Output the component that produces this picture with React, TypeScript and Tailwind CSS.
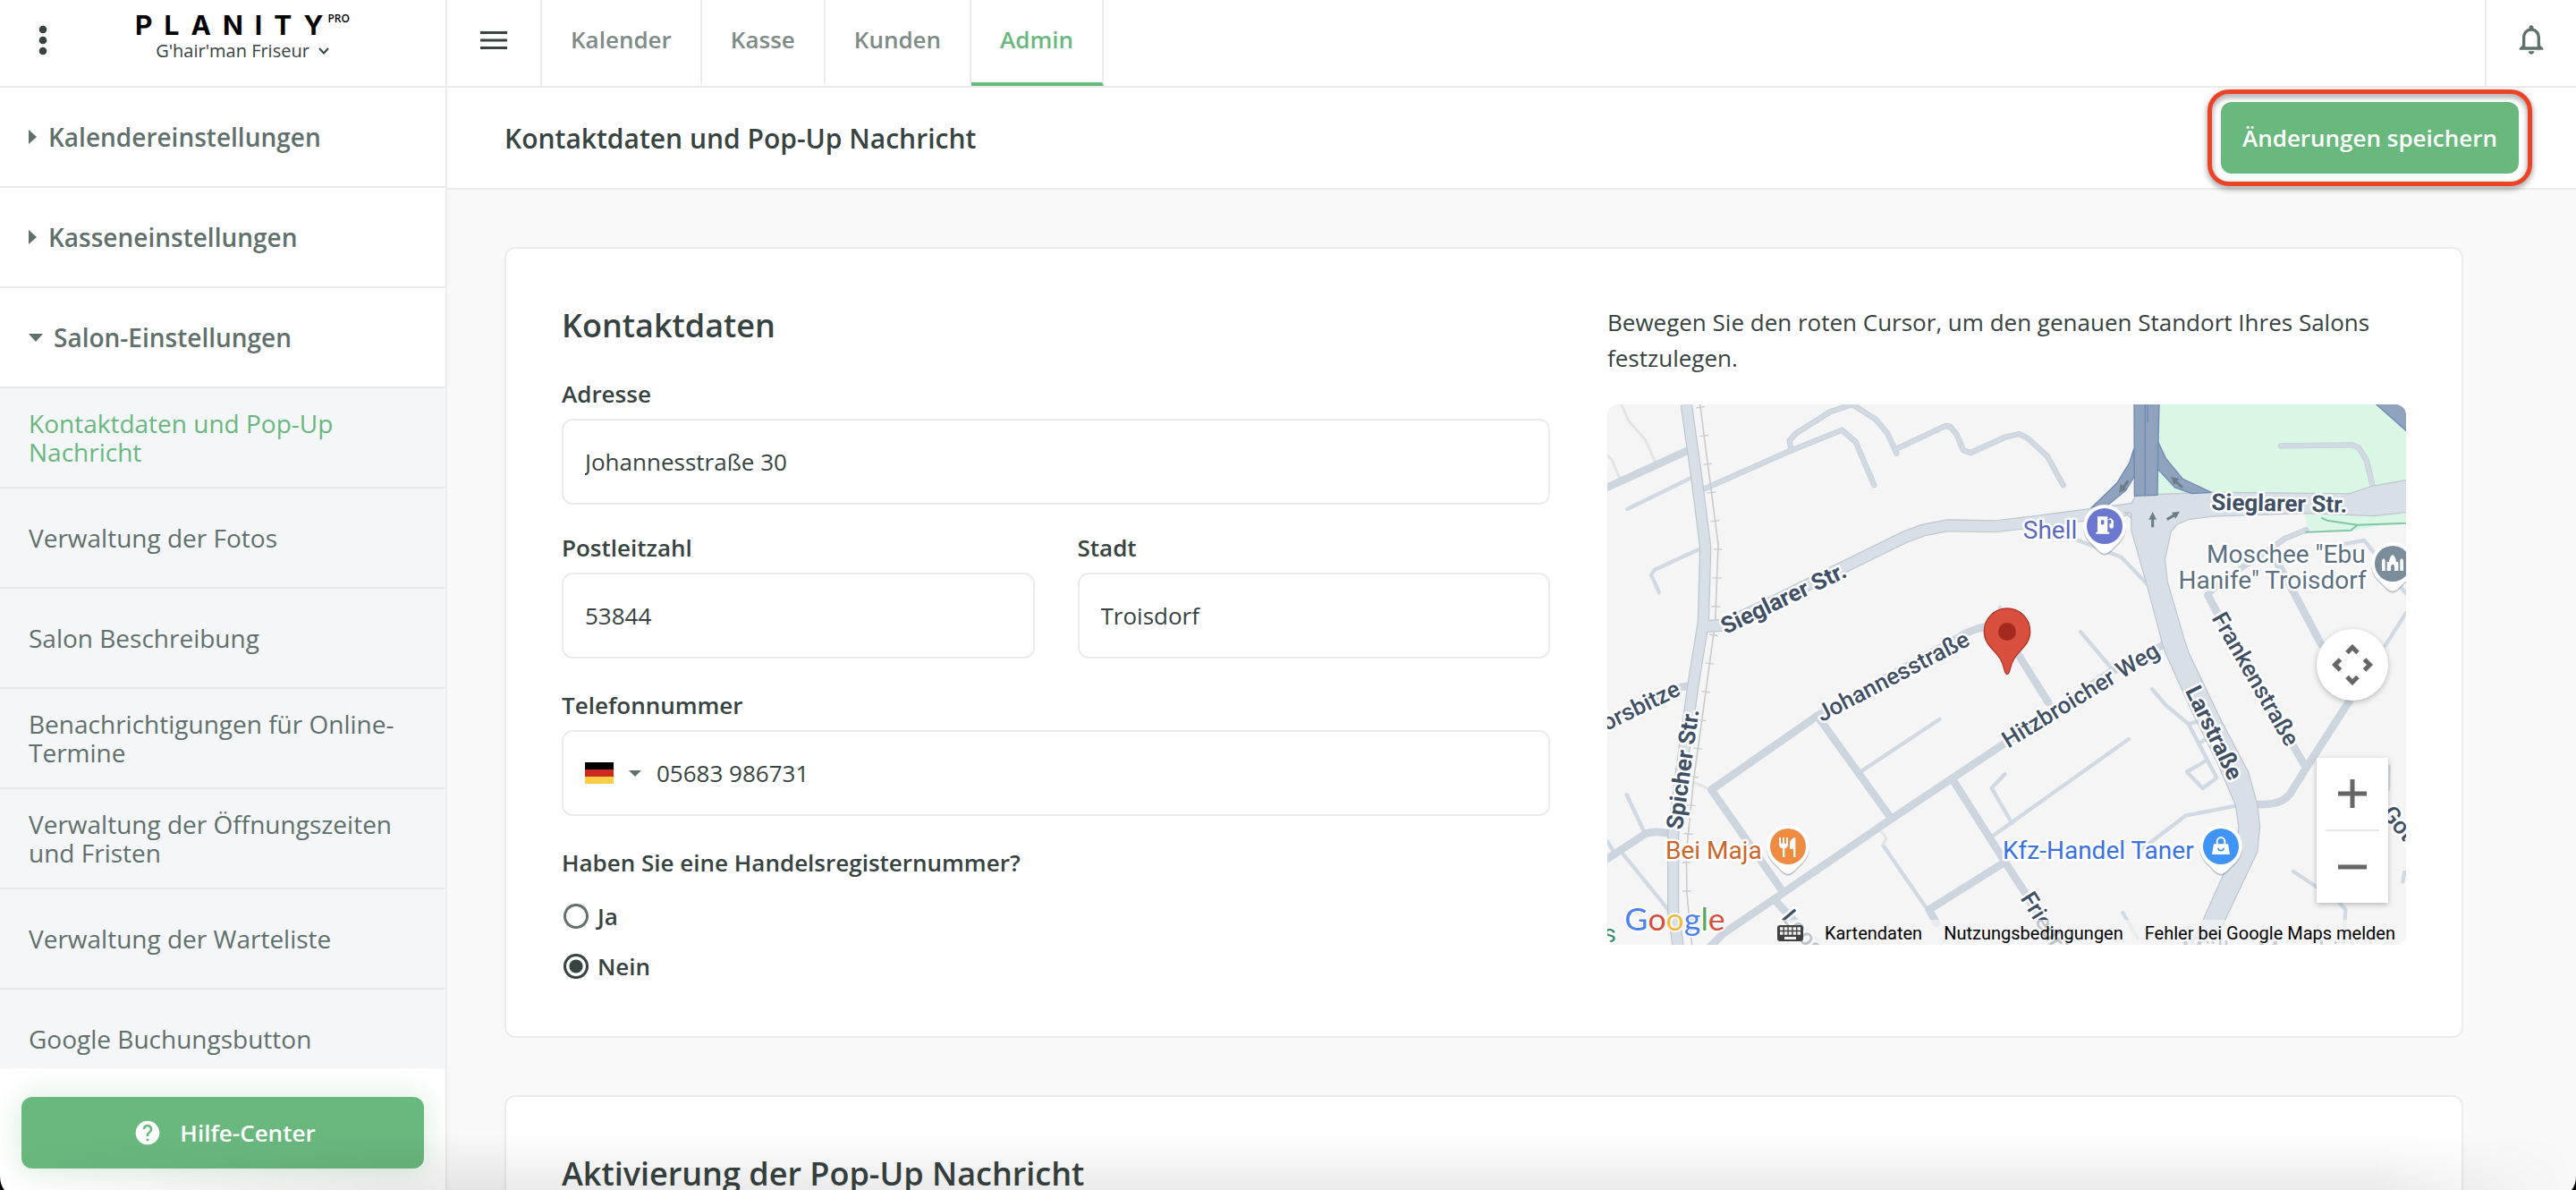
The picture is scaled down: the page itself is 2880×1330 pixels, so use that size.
import React from 'react'
import { MdHelp, MdNotificationsNone } from 'react-icons/md'

const tabs = ['Kalender', 'Kasse', 'Kunden', 'Admin']

const subItems = [
    'Kontaktdaten und Pop-Up Nachricht',
    'Verwaltung der Fotos',
    'Salon Beschreibung',
    'Benachrichtigungen für Online-Termine',
    'Verwaltung der Öffnungszeiten und Fristen',
    'Verwaltung der Warteliste',
    'Google Buchungsbutton',
]

function Caret({ open }: { open?: boolean }) {
    return open ? (
        <svg className="w-4 h-[9px]" viewBox="0 0 16 9" fill="currentColor"><path d="M0 0h16L8 9z" /></svg>
    ) : (
        <svg className="w-2.5 h-4" viewBox="0 0 10 16" fill="currentColor"><path d="M0 0v16l9-8z" /></svg>
    )
}

function SidebarHeader() {
    return (
        <div className="relative h-[98px] shrink-0 border-b-2 border-[#ececec] flex justify-center">
            <button aria-label="Menü" className="absolute left-[43px] top-[28px] text-[#374340]">
                <svg width="10" height="34" viewBox="0 0 10 34" fill="currentColor">
                    <circle cx="5" cy="5" r="4.3" />
                    <circle cx="5" cy="17" r="4.3" />
                    <circle cx="5" cy="29" r="4.3" />
                </svg>
            </button>
            <div className="flex flex-col items-center pt-3 pl-11">
                <div className="flex items-start text-black">
                    <span className="font-['Inter'] font-bold text-[30px] leading-8 tracking-[13px]">PLANITY</span>
                    <span className="-ml-2 text-xs leading-4 font-semibold pt-px">PRO</span>
                </div>
                <button className="flex items-center gap-2.5 text-xl leading-[26px] text-[#374340]">
                    G'hair'man Friseur
                    <svg width="12" height="8" viewBox="0 0 12 8" fill="none" stroke="currentColor" strokeWidth="2"><path d="M1 1l5 5.500 5-5.500" /></svg>
                </button>
            </div>
        </div>
    )
}

function Sidebar() {
    return (
        <aside className="w-[500px] shrink-0 flex flex-col border-r-2 border-[#ececec] bg-white text-[28px] text-[#60706b]">
            <SidebarHeader />
            <nav className="flex-1 min-h-0 overflow-hidden">
                {['Kalendereinstellungen', 'Kasseneinstellungen', 'Salon-Einstellungen'].map((item, index) => (
                    <button key={item} className="w-full h-28 flex items-center gap-3 px-8 border-b-2 border-[#e8eaea] font-semibold">
                        <Caret open={index === 2} />
                        {item}
                    </button>
                ))}
                <ul className="bg-[#f5f6f8]">
                    {subItems.map((item, index) => (
                        <li key={item} className="h-28 border-b-2 border-[#e8eaea]">
                            <a href="#" className={`h-full flex items-center px-8 leading-8 ${index === 0 ? 'text-[#68b87e]' : ''}`}>{item}</a>
                        </li>
                    ))}
                </ul>
            </nav>
            <div className="px-6 pt-8 pb-6">
                <button className="w-full h-20 pl-1 flex items-center justify-center gap-5 rounded-xl bg-[#69b87e] text-white text-[26px] font-semibold shadow-[0_0_32px_rgba(105,184,126,0.3)]">
                    <MdHelp size={32} />
                    Hilfe-Center
                </button>
            </div>
        </aside>
    )
}

function TopBar() {
    return (
        <header className="h-[98px] shrink-0 flex border-b-2 border-[#ececec] bg-white">
            <button aria-label="Navigation" className="w-[106px] pb-1.5 flex items-center justify-center border-r-2 border-[#ececec]">
                <svg width="30" height="20" viewBox="0 0 30 20" fill="#374340"><path d="M0 0h30v3H0zM0 8.500h30v3H0zM0 17h30v3H0z" /></svg>
            </button>
            <nav className="flex">
                {tabs.map((tab) => (
                    <a
                        key={tab}
                        href="#"
                        className={`px-8 pb-1 flex items-center border-r-2 border-r-[#ececec] border-b-4 text-[26px] font-semibold ${tab === 'Admin' ? 'border-b-[#69b87e] text-[#69b87e]' : 'border-b-transparent text-[#7f8b87]'}`}
                    >
                        {tab}
                    </a>
                ))}
            </nav>
            <button aria-label="Benachrichtigungen" className="ml-auto w-[102px] pb-2 flex items-center justify-center border-l-2 border-[#ececec] text-[#60706b]">
                <MdNotificationsNone size={40} />
            </button>
        </header>
    )
}

const localRoads = [
    'M0 278L129 219 267 156',
    'M349 1292L704 1044 1209 764Q1270 738 1319 744L1379 840 1479 999',
    'M704 1044L949 1384M349 1292L589 1634',
    'M344 1819L389 1774 559 1659 939 1399 1329 1139 1684 900 1869 804',
    'M1159 1259L1334 1534 1399 1634 1500 1812M1334 1534L1079 1694 1104 1740',
    'M559 1659L629 1734 709 1814',
    'M0 1524L129 1439Q160 1428 215 1439M279 944L249 947L0 1060',
    'M2249 534L2299 624 2394 804',
    'M2014 639L2069 744 2341 1214',
    'M2489 994L2344 1219 2290 1306Q2260 1345 2179 1341',
]

const smallRoads = [
    'M67 351L282 246M312 484L159 554 147 572 174 631',
    'M1317 680V744M1114 1056L849 1232',
    'M1749 1122L1294 1446M1334 1239L1289 1286 1357 1404',
    'M929 1484L1074 1694M65 1309L124 1434M0 1464L24 1504M54 1509L204 1694',
    'M1574 454L1724 512 1814 606M1587 762L1699 894',
    'M2464 469L2539 456 2679 634M2679 699L2609 809',
    'M2109 1346L1939 1379 1789 1494',
    'M1827 954L1874 1009 1949 1071 1979 1064M1949 1071L2044 1252 1997 1287 1944 1232 2009 1194M1984 1137L2004 1124',
    'M2301 1566L2449 1664 2476 1694 2469 1814M1729 1704L1779 1790M2621 1214L2619 1290M2674 1569L2668 1600',
]

const mediumRoads = [
    'M324 284L617 154 787 86 833 126 895 271',
    'M617 154L611 121 634 96 749 24 822 0 899 49 939 96 970 164',
    'M970 149L1134 72 1149 74 1171 99 1194 154 1219 162 1336 109 1382 99 1411 114 1476 174 1529 271',
    'M2344 421L2274 449 2209 494 2119 554 2049 604 2014 639',
    'M2259 139L2499 136 2521 146 2547 189 2567 274',
]

const spicher = 'M265 0L300 250 329 480 322 730 288 940 245 1250 221 1444 221 1700 237 1814'
const sieglarer = 'M330 744L390 740 560 660 779 552 999 444 1059 422 1139 406 1299 409 1449 391 1764 350 1820 345'
const larstrasse = 'M1759 332L1774 306 2029 296 2489 301 2564 276 2690 254V359L2572 372 2339 363 2029 374 1949 384 1909 402 1889 426 1869 519 1877 594 1934 789 1949 834 2059 1064 2149 1234 2179 1344 2187 1414 2179 1499 2069 1731 2030 1820H1955L1999 1731 2069 1574 2114 1484 2119 1414 2109 1344 2049 1204 1969 1044 1874 834 1864 804 1814 614 1759 422Z'
const rail = 'M311 0L372 470 362 730 289 1264 265 1504 267 1640 284 1814'

function PoiPin({ x, y, color, children }: any) {
    return (
        <g transform={`translate(${x} ${y})`}>
            <path d="M0 98C-10 98-22 88-30 78L-52 56A72 72 0 1 1 52 56L30 78C22 88 10 98 0 98Z" fill="#5f6b76" opacity=".35" />
            <path d="M0 92C-10 92-22 82-30 72L-52 50A72 72 0 1 1 52 50L30 72C22 82 10 92 0 92Z" fill="#fff" />
            <circle r="60" fill={color} />
            {children}
        </g>
    )
}

function MapDrawing() {
    return (
        <svg className="block w-full h-full font-['Roboto']" viewBox="0 0 2679 1812" preserveAspectRatio="xMidYMid slice">
            <rect width="2679" height="1812" fill="#f5f5f5" />
            <path d="M1849 0H2679V270L2489 310 1847 300ZM2339 369L2679 354V392L2504 422 2349 420Z" fill="#daf6e4" />
            <g fill="none" strokeLinejoin="round" strokeLinecap="round">
                <path d="M47 0L71 54 129 121 161 194M0 171L15 184 41 246M294 1269L339 1289M914 1427L936 1454 922 1480" stroke="#e2e4e5" strokeWidth="9" />
                {smallRoads.map((d) => <path key={d} d={d} stroke="#d1dae3" strokeWidth="13" />)}
                {mediumRoads.map((d) => <path key={d} d={d} stroke="#c6cfd7" strokeWidth="19" />)}
                {mediumRoads.map((d) => <path key={d} d={d} stroke="#d1dae3" strokeWidth="14" />)}
                {localRoads.map((d) => <path key={d} d={d} stroke="#cdd6df" strokeWidth="26" />)}
                <path d="M2397 381L2414 389 2516 404 2679 398M2516 404L2494 422 2344 428" stroke="#7fc5aa" strokeWidth="6" />
                <path d={rail} stroke="#c9cccf" strokeWidth="5" />
                <path d={rail} stroke="#c9cccf" strokeWidth="30" strokeLinecap="butt" strokeDasharray="4 92" strokeDashoffset="-8" />
            </g>
            <g fill="none" stroke="#bcc6cd" strokeLinejoin="round">
                <path d={spicher} strokeWidth="40" />
                <path d={sieglarer} strokeWidth="42" />
                <path d={larstrasse} strokeWidth="7" />
            </g>
            <g fill="none" stroke="#d8dfe6" strokeLinejoin="round">
                <path d={spicher} strokeWidth="33" />
                <path d={sieglarer} strokeWidth="35" />
                <path d={larstrasse} fill="#d8dfe6" stroke="none" />
            </g>
            <path d="M1737 362L1756 366V380Z" fill="#f5f5f5" stroke="#bcc6cd" strokeWidth="4" />
            <g fill="#8fa3be" stroke="#6f8bb4" strokeWidth="4">
                <path d="M1766 149L1751 196 1709 264 1625 345 1678 338 1739 288 1769 239Z" />
                <path d="M1844 119L1874 182 1929 249 2026 295 1960 299 1904 279 1844 214Z" />
                <path d="M1767 -5H1851L1848 119 1845 304 1768 307Z" />
                <path d="M1804 -5V304M1812 -5V60" fill="none" />
                <path d="M2576 -3L2683 92V-3Z" />
            </g>
            <g fill="none" stroke="#6c7d88" strokeWidth="9">
                <path d="M1829 412V372M1877 386L1908 368M1747 256L1728 282M1929 279L1902 254" />
                <g fill="#6c7d88" stroke="none">
                    <path d="M1829 360L1842 386H1816ZM1920 359L1906 383 1893 362ZM1717 296L1720 266 1742 284ZM1890 243L1918 249 1901 270Z" />
                </g>
            </g>

            <g fill="#3f5064" stroke="#fff" strokeWidth="15" strokeLinejoin="round" paintOrder="stroke" fontSize="78" fontWeight="500">
                <g fontWeight="700">
                    <text transform="translate(397 772) rotate(-25.5)">Sieglarer Str.</text>
                    <text transform="translate(2026 354) rotate(1)">Sieglarer Str.</text>
                    <text transform="translate(251 1428) rotate(-82)">Spicher Str.</text>
                    <text transform="translate(1937 960) rotate(64)">Larstraße</text>
                </g>
                <text transform="translate(719 1066) rotate(-27.500)">Johannesstraße</text>
                <text transform="translate(1345 1154) rotate(-31.500)">Hitzbroicher Weg</text>
                <text transform="translate(2026 716) rotate(60)">Frankenstraße</text>
                <text transform="translate(1384 1656) rotate(58)">Friedrich</text>
                <text transform="translate(250 972) rotate(-26)" textAnchor="end">orsbitze</text>
                <text transform="translate(581 1722) rotate(50)">Loos</text>
                <text transform="translate(2594 1374) rotate(50)">Gott</text>
            </g>
            <g stroke="#fff" strokeWidth="15" strokeLinejoin="round" paintOrder="stroke" fontSize="84" textAnchor="end">
                <text x="1576" y="449" fill="#5b68c0">Shell</text>
                <text x="2543" y="532" fill="#5b7080">Moschee "Ebu</text>
                <text x="2546" y="617" fill="#5b7080">Hanife" Troisdorf</text>
                <text x="518" y="1524" fill="#cc6528">Bei Maja</text>
                <text x="1967" y="1524" fill="#3a72e4">Kfz-Handel Taner</text>
                <text x="30" y="1804" fill="#3a8a62">s</text>
                <text x="2590" y="1861" fill="#5b7080">Müller Maschinen</text>
            </g>
            <g stroke="#fff" strokeWidth="10" paintOrder="stroke" fontFamily="Lato" fontSize="107">
                <text x="58" y="1765">
                    <tspan fill="#4b82ee">G</tspan><tspan fill="#d84f40">o</tspan><tspan fill="#efbd3e">o</tspan><tspan fill="#4b82ee">g</tspan><tspan fill="#57a75a">l</tspan><tspan fill="#d84f40">e</tspan>
                </text>
            </g>

            <PoiPin x={1668} y={408} color="#6c78d0">
                <path d="M-24-32H10V20H16V26H-29V20H-24ZM-12-20V-5H-2V-20ZM12-22L20-28 30-18V0Q30 8 22 8 16 8 16 0V-8H22V-20Z" fill="#fff" fillRule="evenodd" />
            </PoiPin>
            <PoiPin x={606} y={1482} color="#ef8a41">
                <path d="M-30-30H-24V-10H-18V-30H-12V-10H-6V-30H0V-6Q0 4-11 7V36H-18V7Q-30 4-30-6ZM25-30V36H18V8H6V-10Q8-28 25-30Z" fill="#fff" />
            </PoiPin>
            <PoiPin x={2058} y={1482} color="#4093f7">
                <path d="M-24-8H24L30 27H-30Z" fill="#fff" />
                <path d="M-13-8V-16A13 14 0 0 1 13-16V-8" fill="none" stroke="#fff" strokeWidth="6" />
                <path d="M-9 5A9 9 0 0 0 9 5" fill="none" stroke="#4093f7" strokeWidth="5" />
            </PoiPin>
            <PoiPin x={2634} y={534} color="#7b8d9a">
                <path d="M-36 24V-12L-30-18-25-12V24ZM25 24V-12L30-18 36-12V24ZM-19 24V-6H-12Q-10-24 0-30 10-24 12-6H19V24H6V10A6 8 0 0 0-6 10V24Z" fill="#fff" />
            </PoiPin>
            <path d="M1341 904C1330 904 1334 880 1319 855 1300 822 1264 806 1264 761A77 77 0 0 1 1418 761C1418 806 1382 822 1363 855 1348 880 1352 904 1341 904Z" fill="#d9503f" stroke="#b5322a" strokeWidth="4" />
            <circle cx="1341" cy="762" r="30" fill="#a42a20" />
        </svg>
    )
}

function SalonMap() {
    return (
        <div className="relative h-[604px] rounded-xl overflow-hidden font-['Roboto']">
            <MapDrawing />
            <button aria-label="Kamerasteuerung" className="absolute right-5 top-[251px] size-20 flex items-center justify-center rounded-full bg-white shadow-[0_2px_6px_rgba(0,0,0,0.25)]">
                <svg width="46" height="46" viewBox="0 0 46 46" fill="none" stroke="#666" strokeWidth="5">
                    <path d="M17 9.500L23 3.500 29 9.500M17 36.500L23 42.500 29 36.500M9.500 17L3.500 23 9.500 29M36.500 17L42.500 23 36.500 29" />
                </svg>
            </button>
            <div className="absolute right-5 top-[395px] w-20 flex flex-col items-center bg-white shadow-[0_2px_6px_rgba(0,0,0,0.25)]">
                <button aria-label="Vergrößern" className="size-20 flex items-center justify-center">
                    <svg width="34" height="34" viewBox="0 0 34 34" stroke="#666" strokeWidth="5"><path d="M1 17h32M17 1v32" /></svg>
                </button>
                <div className="w-15 h-0.5 bg-[#e6e6e6]"></div>
                <button aria-label="Verkleinern" className="size-20 flex items-center justify-center">
                    <svg width="34" height="34" viewBox="0 0 34 34" stroke="#666" strokeWidth="5"><path d="M1 17h32" /></svg>
                </button>
            </div>
            <div className="absolute right-0 bottom-0 h-7 pt-0.5 flex items-center text-xl text-black bg-[#f5f5f5]/70">
                <button aria-label="Tastaturkürzel" className="pr-3">
                    <svg width="29" height="18" viewBox="0 0 29 18">
                        <rect width="29" height="18" rx="3" fill="#404040" />
                        <path d="M3 4h23M3 9h23" stroke="#f0f0f0" strokeWidth="3.500" strokeDasharray="3.500 1.375" />
                        <path d="M8 14.500h13" stroke="#f0f0f0" strokeWidth="3" />
                    </svg>
                </button>
                <button className="px-3">Kartendaten</button>
                <a href="#" className="px-3">Nutzungsbedingungen</a>
                <a href="#" className="px-3">Fehler bei Google Maps melden</a>
            </div>
        </div>
    )
}

function Field({ id, label, value }: { id: string, label: string, value: string }) {
    return (
        <div className="flex flex-col gap-2.5">
            <label htmlFor={id} className="leading-9 font-semibold">{label}</label>
            <input id={id} defaultValue={value} className="w-full h-24 px-6 rounded-xl border-2 border-[#ececec] bg-white" />
        </div>
    )
}

function ContactForm() {
    return (
        <form>
            <h2 className="text-4xl leading-12 font-semibold mb-[34px]">Kontaktdaten</h2>
            <Field id="adresse" label="Adresse" value="Johannesstraße 30" />
            <div className="grid grid-cols-2 gap-12 mt-[30px]">
                <Field id="plz" label="Postleitzahl" value="53844" />
                <Field id="stadt" label="Stadt" value="Troisdorf" />
            </div>
            <div className="flex flex-col gap-2.5 mt-[34px]">
                <label htmlFor="telefon" className="leading-9 font-semibold">Telefonnummer</label>
                <div className="h-24 flex items-center px-6 rounded-xl border-2 border-[#ececec]">
                    <button type="button" aria-label="Land" className="flex items-center gap-[17px] text-[#60706b]">
                        <svg width="32" height="24" viewBox="0 0 32 24">
                            <path d="M0 0h32v8H0z" />
                            <path d="M0 8h32v8H0z" fill="#cc2b1d" />
                            <path d="M0 16h32v8H0z" fill="#f8cf46" />
                        </svg>
                        <svg width="14" height="7" viewBox="0 0 14 7" fill="currentColor"><path d="M0 0h14L7 7z" /></svg>
                    </button>
                    <input id="telefon" type="tel" defaultValue="05683 986731" className="flex-1 h-full pl-[17px]" />
                </div>
            </div>
            <fieldset className="mt-[34px]">
                <legend className="leading-9 font-semibold mb-3.5">Haben Sie eine Handelsregisternummer?</legend>
                {['Ja', 'Nein'].map((item) => (
                    <label key={item} className="h-14 flex items-center gap-2.5 pl-0.5 font-semibold">
                        <input
                            type="radio"
                            name="handelsregister"
                            defaultChecked={item === 'Nein'}
                            className="appearance-none size-7 rounded-full border-3 border-[#60706b] checked:border-[#374340] checked:bg-[radial-gradient(circle,#374340_7px,transparent_8px)]"
                        />
                        {item}
                    </label>
                ))}
            </fieldset>
        </form>
    )
}

export default function App() {
    return (
        <div className="relative h-screen flex overflow-hidden bg-[#f9f9f9] text-[26px] text-[#374340] font-['Open_Sans',sans-serif]">
            <Sidebar />
            <div className="flex-1 min-w-0 flex flex-col">
                <TopBar />
                <div className="h-[114px] shrink-0 flex items-center justify-between px-16 border-b-2 border-[#ececec] bg-white">
                    <h1 className="text-[30px] font-semibold">Kontaktdaten und Pop-Up Nachricht</h1>
                    <div className="relative">
                        <button className="h-20 px-6 rounded-xl bg-[#69b87e] text-white font-semibold">Änderungen speichern</button>
                        <div className="absolute -inset-x-[15px] -inset-y-3.5 rounded-3xl border-5 border-[#ec4226] pointer-events-none drop-shadow-[0_3px_3px_rgba(0,0,0,0.45)]"></div>
                    </div>
                </div>
                <main className="flex-1 min-h-0 overflow-hidden pt-16 pl-16 pr-[126px]">
                    <section className="grid grid-cols-[1105fr_893fr] gap-16 px-[62px] pt-[62px] pb-[50px] rounded-xl border-2 border-[#ececec] bg-white">
                        <ContactForm />
                        <div>
                            <p className="leading-10 mb-8">Bewegen Sie den roten Cursor, um den genauen Standort Ihres Salons festzulegen.</p>
                            <SalonMap />
                        </div>
                    </section>
                    <section className="mt-16 px-[62px] py-[62px] rounded-xl border-2 border-[#ececec] bg-white">
                        <h2 className="text-4xl leading-12 font-semibold">Aktivierung der Pop-Up Nachricht</h2>
                    </section>
                </main>
            </div>
            <div className="absolute inset-x-0 bottom-0 h-16 pointer-events-none bg-linear-to-t from-black/8 to-transparent mask-r-from-92% mask-l-from-85%"></div>
            <svg className="absolute left-0 bottom-0 w-2 h-4" viewBox="0 0 8 16"><path d="M0 0Q0 10 5 16H0z" /></svg>
            <svg className="absolute right-0 bottom-0 w-2 h-4" viewBox="0 0 8 16"><path d="M8 0Q8 10 3 16H8z" /></svg>
        </div>
    )
}
